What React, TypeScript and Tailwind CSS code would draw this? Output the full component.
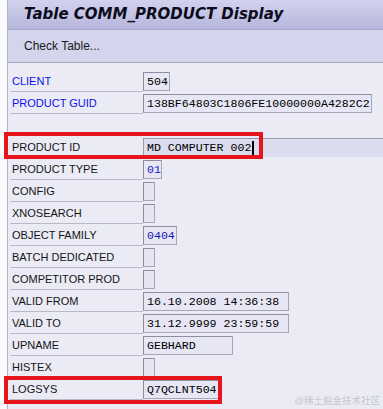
import React from "react";

type Row = {
  label: string;
  blue?: boolean;
  value?: string;
  w?: number;
  check?: boolean;
  valueBlue?: boolean;
  wide?: boolean;
  cursor?: boolean;
};

const rows: (Row | null)[] = [
  { label: "CLIENT", blue: true, value: "504", w: 27 },
  { label: "PRODUCT GUID", blue: true, value: "138BF64803C1806FE10000000A4282C2", w: 229 },
  null,
  { label: "PRODUCT ID", value: "MD COMPUTER 002", wide: true, cursor: true },
  { label: "PRODUCT TYPE", value: "01", w: 19, valueBlue: true },
  { label: "CONFIG", check: true },
  { label: "XNOSEARCH", check: true },
  { label: "OBJECT FAMILY", value: "0404", w: 34, valueBlue: true },
  { label: "BATCH DEDICATED", check: true },
  { label: "COMPETITOR PROD", check: true },
  { label: "VALID FROM", value: "16.10.2008 14:36:38", w: 146 },
  { label: "VALID TO", value: "31.12.9999 23:59:59", w: 146 },
  { label: "UPNAME", value: "GEBHARD", w: 90 },
  { label: "HISTEX", check: true },
  { label: "LOGSYS", value: "Q7QCLNT504", w: 76 },
];

const mono = { fontFamily: '"Liberation Mono", "Courier New", monospace' };

function Field({ r }: { r: Row }) {
  if (r.check) {
    return (
      <div className="h-[19px] w-[12px] border border-[#a6a6b6] border-t-[#8e8e9e] border-l-[#8e8e9e] bg-[#e4e4f2]" />
    );
  }
  if (r.wide) {
    return (
      <div
        className="h-[19px] flex-1 border-t border-l border-[#9a9aaa] bg-[#dcdcef] pl-[3px] text-[11.6px] leading-[18px] text-black flex items-center"
        style={mono}
      >
        <span className="whitespace-pre">{r.value}</span>
        {r.cursor && <span className="ml-[1px] inline-block h-[15px] w-[2px] bg-black" />}
      </div>
    );
  }
  return (
    <div
      className={`h-[19px] border border-[#a6a6b6] border-t-[#8e8e9e] border-l-[#8e8e9e] bg-[#e6e6f4] pl-[3px] text-[11.6px] leading-[17px] whitespace-pre ${
        r.valueBlue ? "text-[#1a1ab4]" : "text-black"
      }`}
      style={{ ...mono, width: r.w }}
    >
      {r.value}
    </div>
  );
}

export default function App() {
  return (
    <div
      className="relative flex h-[409px] w-[383px] overflow-hidden bg-[#fbfbfd]"
      style={{ fontFamily: '"Liberation Sans", Arial, sans-serif' }}
    >
      <div className="w-[7px] shrink-0 bg-[#fbfbfd]" />
      <div className="flex min-w-0 flex-1 flex-col border-l border-[#b4b4c8] bg-[#ebebf5]">
        <div className="flex h-[30px] shrink-0 items-center border-b border-[#a8a8cc] bg-gradient-to-b from-[#d2d2ee] to-[#b6b6dc] pl-[16px]">
          <span
            className="whitespace-nowrap text-[15px] font-bold italic text-[#0c0c1c]"
            style={{ fontFamily: '"DejaVu Sans", Verdana, sans-serif' }}
          >
            Table COMM_PRODUCT Display
          </span>
        </div>
        <div className="flex h-[33px] shrink-0 items-center border-b border-[#a4a4bc] bg-[#d4d4ec] pl-[16px] text-[12px] text-[#1a1a1a]">
          Check Table...
        </div>
        <div className="flex flex-col pl-[2px] pt-[9px]">
          {rows.map((r, i) =>
            r === null ? (
              <div key={i} className="h-[22px]" />
            ) : (
              <div key={i} className="flex h-[22px] items-start">
                <div
                  className={`h-[20px] w-[133px] shrink-0 border-b border-[#b9b9c9] pl-[2px] text-[11px] leading-[19px] whitespace-nowrap ${
                    r.blue ? "text-[#1010e8]" : "text-[#141414]"
                  }`}
                >
                  {r.label}
                </div>
                <Field r={r} />
              </div>
            )
          )}
        </div>
      </div>

      <div className="pointer-events-none absolute left-[4px] top-[132px] h-[27px] w-[259px] border-[4px] border-[#e8141c]" />
      <div className="pointer-events-none absolute left-[4px] top-[376px] h-[28px] w-[218px] border-[4px] border-[#e8141c]" />

      <div
        className="pointer-events-none absolute right-[3px] bottom-[3px] whitespace-nowrap text-[9.5px] leading-[10px] text-[#c6c6ce]"
        style={{ fontFamily: '"Liberation Sans", "Noto Sans CJK SC", sans-serif' }}
      >
        @稀土掘金技术社区
      </div>
    </div>
  );
}
